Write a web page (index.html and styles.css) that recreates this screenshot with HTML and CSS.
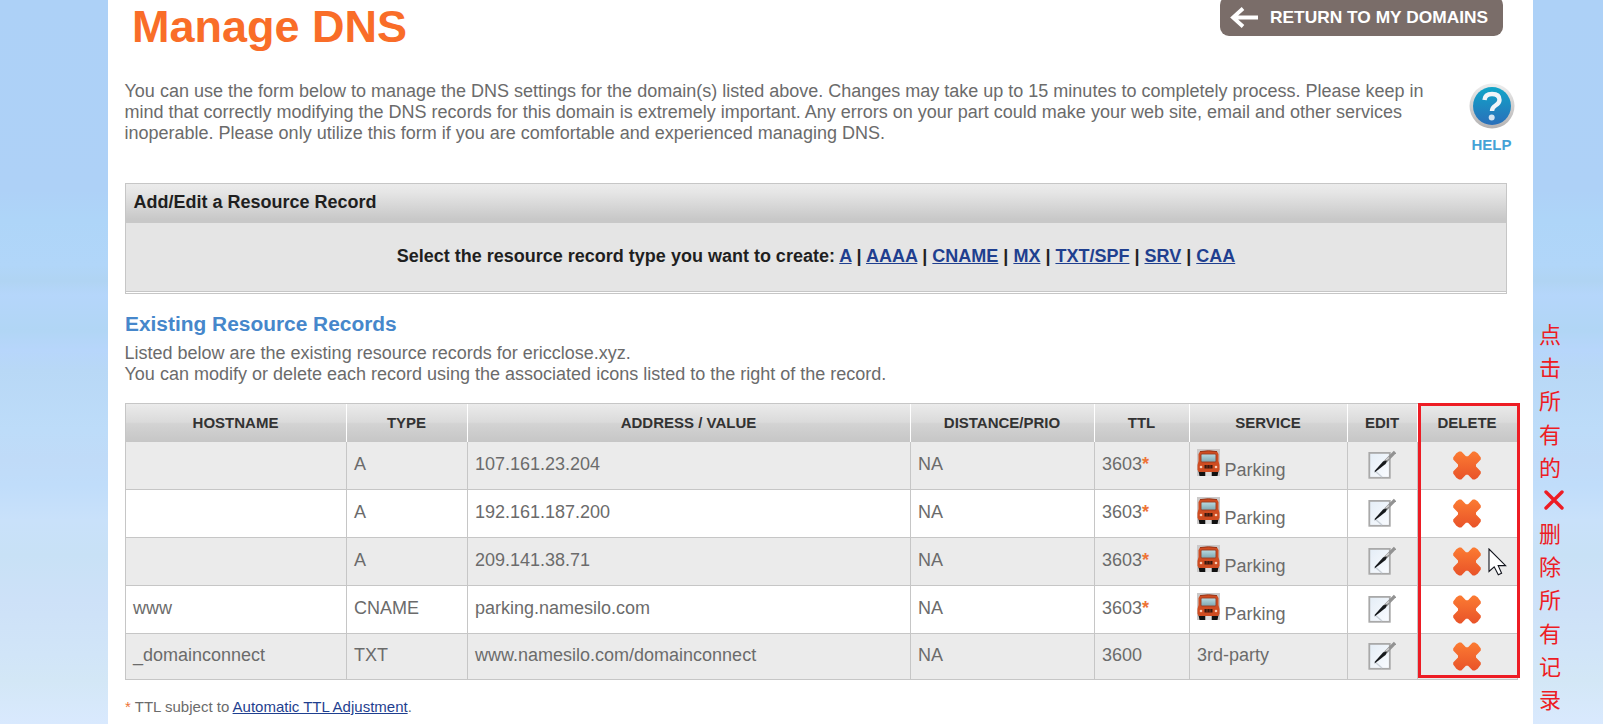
FILE: index.html
```html
<!DOCTYPE html>
<html lang="en">
<head>
<meta charset="utf-8">
<title>Manage DNS</title>
<link rel="stylesheet" href="styles.css">
</head>
<body>
<svg class="defs" width="0" height="0" aria-hidden="true">
  <defs>
    <linearGradient id="gx" x1="0" y1="0" x2="0" y2="1"><stop offset="0" stop-color="#fb7a32"/><stop offset="1" stop-color="#e95429"/></linearGradient>
    <linearGradient id="gh" x1="0" y1="0" x2="0" y2="1"><stop offset="0" stop-color="#10a5c8"/><stop offset="1" stop-color="#2a6fba"/></linearGradient>
    <linearGradient id="gr" x1="0" y1="0" x2="0" y2="1"><stop offset="0" stop-color="#eeeeee"/><stop offset="1" stop-color="#b4b2b2"/></linearGradient>
    <linearGradient id="gw" x1="0" y1="0" x2="0" y2="1"><stop offset="0" stop-color="#b9dbe2"/><stop offset="1" stop-color="#7fa6b0"/></linearGradient>
    <linearGradient id="gp" x1="0" y1="0" x2="1" y2="1"><stop offset="0" stop-color="#e4edf6"/><stop offset="1" stop-color="#fafcff"/></linearGradient>
  </defs>
  <symbol id="cross" viewBox="0 0 28 29"><path fill="url(#gx)" stroke="url(#gx)" stroke-width="1.600" stroke-linejoin="round" d="M6.500 1.200L3.800 3L1 6.800V8.200L5.800 13.200V15.800L1 20.800V22.200L3.800 26L6.500 27.800H8L12.600 23H15.400L20 27.800H21.500L24.200 26L27 22.200V20.800L22.200 15.800V13.200L27 8.200V6.800L24.200 3L21.500 1.200H20L15.400 6H12.600L8 1.200Z"/></symbol>
  <symbol id="edit" viewBox="0 0 28 30">
    <rect x="1.300" y="2.900" width="20.500" height="24.900" fill="url(#gp)" stroke="#a9a9a9" stroke-width="1.800"/>
    <path d="M7 21L14 27" stroke="#c9d0d8" stroke-width="1.500"/>
    <path d="M16 13L27 2" stroke="#929292" stroke-width="3.200"/>
    <path d="M7 20.500L15 11.500L19 10.500L17.500 14L10.500 19.500L6.500 22.500Z" fill="#16191c"/>
    <path d="M18 10L21 7.500" stroke="#d4d4d4" stroke-width="1.200"/>
  </symbol>
  <symbol id="bus" viewBox="0 0 23 27">
    <rect width="23" height="27" fill="#cbc9c9"/>
    <path d="M1.500 22H8.500V27H2.500ZM14.500 22H21.500L20.500 27H14.500Z" fill="#111"/>
    <path d="M8.500 23H14.500V27H8.500Z" fill="#dedede"/>
    <path d="M3 2.500Q11.500 1 20 2.500L21.500 5V12L22.500 16V21L21 23H2L.5 21V16L1.500 12V5Z" fill="#cf4c21"/>
    <path d="M3 2.600Q11.500 1 20 2.600" fill="none" stroke="#963416" stroke-width="1"/>
    <rect x="4" y="5" width="15" height="8" rx="1" fill="url(#gw)" stroke="#973c22" stroke-width=".9"/>
    <path d="M7.500 16H15.500V19.500H7.500Z" fill="#38180e"/>
    <path d="M10 16V19.500M13 16V19.500" stroke="#a13e20" stroke-width=".7"/>
    <circle cx="4" cy="18" r="1.300" fill="#f9cdb8"/><circle cx="19" cy="18" r="1.300" fill="#f9cdb8"/>
  </symbol>
</svg>
<main class="page">
  <header class="top">
    <h1>Manage DNS</h1>
    <a class="return"><svg width="29" height="21" viewBox="0 0 29 21"><path d="M13 1.500L3 10.500L13 19.500M4 10.500H28" fill="none" stroke="#fff" stroke-width="3.800"/></svg><span>RETURN TO MY DOMAINS</span></a>
  </header>
  <section class="intro">
    <p>You can use the form below to manage the DNS settings for the domain(s) listed above. Changes may take up to 15 minutes to completely process. Please keep in<br>mind that correctly modifying the DNS records for this domain is extremely important. Any errors on your part could make your web site, email and other services<br>inoperable. Please only utilize this form if you are comfortable and experienced managing DNS.</p>
    <a class="help"><svg width="46" height="46" viewBox="0 0 46 46"><circle cx="23" cy="23" r="22.500" fill="url(#gr)"/><circle cx="23" cy="23" r="19" fill="url(#gh)"/><path d="M15.500 17Q16 11 23 11Q30.500 11 30.500 17Q30.500 20 26.500 22.500Q23 24.600 23 28" fill="none" stroke="#f1f5f9" stroke-width="4.400"/><circle cx="22.700" cy="34.500" r="3" fill="#d4e4f2"/></svg><span>HELP</span></a>
  </section>
  <section class="editor">
    <h2>Add/Edit a Resource Record</h2>
    <p>Select the resource record type you want to create: <a>A</a> | <a>AAAA</a> | <a>CNAME</a> | <a>MX</a> | <a>TXT/SPF</a> | <a>SRV</a> | <a>CAA</a></p>
  </section>
  <h3>Existing Resource Records</h3>
  <p class="about">Listed below are the existing resource records for ericclose.xyz.<br>You can modify or delete each record using the associated icons listed to the right of the record.</p>
  <table class="records">
    <colgroup><col class="c-host"><col class="c-type"><col class="c-value"><col class="c-prio"><col class="c-ttl"><col class="c-service"><col class="c-edit"><col class="c-delete"></colgroup>
    <thead><tr><th>HOSTNAME</th><th>TYPE</th><th>ADDRESS / VALUE</th><th>DISTANCE/PRIO</th><th>TTL</th><th>SERVICE</th><th>EDIT</th><th>DELETE</th></tr></thead>
    <tbody>
      <tr><td></td><td>A</td><td>107.161.23.204</td><td>NA</td><td>3603<b>*</b></td><td><span class="service"><svg class="bus"><use href="#bus"/></svg>Parking</span></td><td class="icon"><svg class="edit"><use href="#edit"/></svg></td><td class="icon"><svg class="cross"><use href="#cross"/></svg></td></tr>
      <tr><td></td><td>A</td><td>192.161.187.200</td><td>NA</td><td>3603<b>*</b></td><td><span class="service"><svg class="bus"><use href="#bus"/></svg>Parking</span></td><td class="icon"><svg class="edit"><use href="#edit"/></svg></td><td class="icon"><svg class="cross"><use href="#cross"/></svg></td></tr>
      <tr><td></td><td>A</td><td>209.141.38.71</td><td>NA</td><td>3603<b>*</b></td><td><span class="service"><svg class="bus"><use href="#bus"/></svg>Parking</span></td><td class="icon"><svg class="edit"><use href="#edit"/></svg></td><td class="icon"><svg class="cross"><use href="#cross"/></svg></td></tr>
      <tr><td>www</td><td>CNAME</td><td>parking.namesilo.com</td><td>NA</td><td>3603<b>*</b></td><td><span class="service"><svg class="bus"><use href="#bus"/></svg>Parking</span></td><td class="icon"><svg class="edit"><use href="#edit"/></svg></td><td class="icon"><svg class="cross"><use href="#cross"/></svg></td></tr>
      <tr class="last"><td>_domainconnect</td><td>TXT</td><td>www.namesilo.com/domainconnect</td><td>NA</td><td>3600</td><td>3rd-party</td><td class="icon"><svg class="edit"><use href="#edit"/></svg></td><td class="icon"><svg class="cross"><use href="#cross"/></svg></td></tr>
    </tbody>
  </table>
  <p class="note"><span>*</span> TTL subject to <a>Automatic TTL Adjustment</a>.</p>
</main>
<div class="highlight"></div>
<svg class="cursor" viewBox="0 0 19 28"><path d="M1 1V23.500L6.200 18.800L10.300 26.700L13.600 25.200L10.200 17.600H17.600Z" fill="#fff" stroke="#11131c" stroke-width="1.100"/></svg>
<div class="callout" lang="zh"><span>点</span><span>击</span><span>所</span><span>有</span><span>的</span><svg width="20" height="20" viewBox="0 0 20 20"><path d="M2 2L18 18M18 2L2 18" stroke="#ed1c24" stroke-width="3.400" stroke-linecap="round"/></svg><span>删</span><span>除</span><span>所</span><span>有</span><span>记</span><span>录</span></div>
</body>
</html>
```

FILE: styles.css
```css
* { box-sizing: border-box; }
html { height: 724px; overflow: hidden; }
body {
  margin: 0;
  height: 724px;
  overflow: hidden;
  position: relative;
  padding-left: 108px;
  font: 18px/21px "Liberation Sans", Arial, sans-serif;
  color: #6b6b6b;
  background: linear-gradient(#add1f7 0, #aed1f7 190px, #aed5f8 220px, #b1d6f9 265px, #b0d4f3 281px, #b5d6fb 295px, #b1d6f5 330px, #b7d6fb 350px, #b8d8f6 370px, #bddcf9 430px, #c0dbf8 460px, #c0ddfa 485px, #c9e1fa 520px, #c8e1f6 555px, #cde1f8 600px, #d1e5f8 655px, #d3e7f6 680px, #d9e9fe 724px);
}
.defs { position: absolute; }
p, h1, h2, h3 { margin: 0; }
.page { width: 1425px; height: 724px; background: #fff; padding-left: 17px; }
.top { display: flex; justify-content: space-between; height: 80px; padding: 0 30px 0 7px; }
h1 { font-size: 45px; line-height: 54px; color: #f96d28; }
.return { display: flex; align-items: center; gap: 11px; width: 283px; height: 40px; margin-top: -4px; padding: 2px 0 0 10px; border-radius: 9px; background: #7a6d69; color: #fff; font-size: 17.350px; font-weight: bold; white-space: nowrap; }
.intro { display: flex; height: 103px; white-space: nowrap; }
.intro p { width: 1344px; margin-left: -.5px; padding-top: 1px; }
.help { display: flex; flex-direction: column; align-items: center; width: 46px; padding-top: 3px; color: #44a2d6; font-size: 15px; font-weight: bold; }
.help span { margin-top: 5px; }
.editor { width: 1382px; height: 111px; border: 1px solid #c6c6c6; background: #e5e5e5; color: #1f1f1f; box-shadow: inset 0 -1px #fff, inset 0 -2px #c6c6c6; }
.editor h2 { height: 39px; padding: 0 7.500px; font-size: 18px; line-height: 36px; background: linear-gradient(#ebebeb, #e6e6e6 20%, #c8c8c8 90%); }
.editor p { padding-top: 23px; text-align: center; font-weight: bold; }
a { color: #1f3f8f; text-decoration: underline; }
.return, .help { text-decoration: none; }
h3 { margin-top: 17px; font-size: 20.900px; line-height: 26px; color: #4687cb; }
.about { margin: 6px 0 0 -.5px; height: 60px; }
.records { width: 1393px; table-layout: fixed; border-collapse: separate; border-spacing: 0; border: solid #c6c6c6; border-width: 1px 0 0 1px; }
.c-host { width: 221px; } .c-type { width: 121px; } .c-value { width: 443px; } .c-prio { width: 184px; }
.c-ttl { width: 95px; } .c-service { width: 158px; } .c-edit { width: 70px; } .c-delete { width: 100px; }
th { height: 38px; padding: 0 1px 0 0; border-right: 1px solid #fff; color: #333; font-size: 15px; line-height: 18px; background: linear-gradient(#ebebeb, #dadada 48%, #d3d3d3 52%, #c6c6c6); }
td { height: 48px; padding: 12px 7px 0; vertical-align: top; border: solid #c6c6c6; border-width: 0 1px 1px 0; }
tbody tr:nth-child(odd) { background: #ebebeb; }
.last td { height: 46px; padding-top: 11px; }
td b { color: #ee7437; }
.service { display: flex; align-items: flex-end; gap: 4.500px; height: 32px; margin-top: -5px; }
.bus { width: 23px; height: 27px; align-self: flex-start; }
td.icon, .last td.icon { padding: 8px 2px 0 0; }
.last td.icon { padding-top: 7px; }
.icon svg { display: block; margin: 0 auto; }
.icon .edit { width: 28px; height: 30px; margin-left: 20px; }
.icon .cross { width: 28px; height: 29px; margin-top: 1px; }
.note { margin-top: 18px; font-size: 15px; line-height: 18px; }
.note span { color: #ee7437; }
.highlight { position: absolute; left: 1418px; top: 403px; width: 102px; height: 275px; border: 3px solid #ed1c24; }
.cursor { position: absolute; left: 1488px; top: 548px; width: 19px; height: 28px; }
.callout { position: absolute; left: 1539px; top: 317px; display: grid; grid-auto-rows: 33.180px; align-items: center; color: #ed1c24; font: 22px/33px "Noto Sans CJK SC", sans-serif; }
.callout svg { margin: 2px 0 0 5px; }
```
